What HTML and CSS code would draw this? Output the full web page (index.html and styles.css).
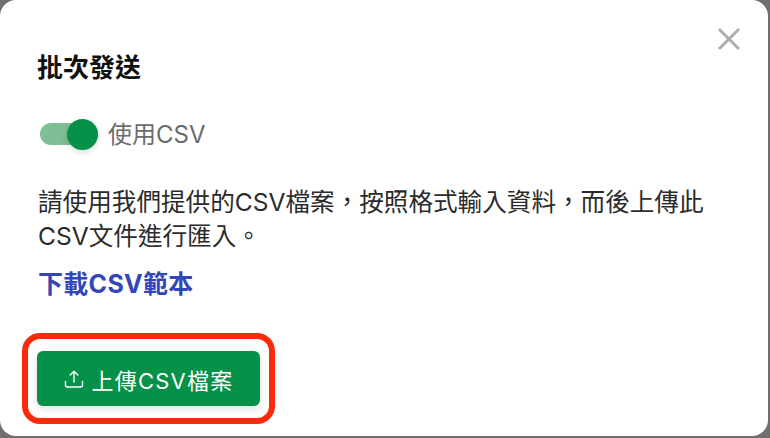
FILE: index.html
```html
<!DOCTYPE html>
<html lang="zh-Hant">
<head>
    <meta charset="UTF-8">
    <meta name="viewport" content="width=device-width, initial-scale=1.0">
    <title>批次發送</title>
    <link rel="stylesheet" href="styles.css">
</head>
<body>
    <div class="modal">
        <button class="close" aria-label="close">
            <svg width="24" height="24" viewBox="0 0 24 24" fill="none" stroke="#aeaeae" stroke-width="3" stroke-linecap="square">
                <path d="M3 3L21 21M21 3L3 21"/>
            </svg>
        </button>

        <h1>批次發送</h1>

        <div class="switch-row">
            <span class="switch"><span class="knob"></span></span>
            <span class="switch-label">使用CSV</span>
        </div>

        <p class="desc">請使用我們提供的CSV檔案，按照格式輸入資料，而後上傳此<br>CSV文件進行匯入。</p>

        <a class="template-link" href="#">下載CSV範本</a>

        <div class="upload-wrap">
            <button class="upload">
                <svg width="20" height="20" viewBox="0 0 20 20" fill="none" stroke="#fff" stroke-width="1.4" stroke-linecap="round" stroke-linejoin="round">
                    <path d="M1.5 12.5v3.5a2 2 0 0 0 2 2h13a2 2 0 0 0 2-2v-3.5"/>
                    <path d="M10 13V2.5M6.2 6L10 2.2 13.8 6"/>
                </svg>
                上傳CSV檔案
            </button>
            <span class="highlight"></span>
        </div>
    </div>
</body>
</html>
```

FILE: styles.css
```css
/* Page */
* {
    box-sizing: border-box;
}
html, body {
    margin: 0;
    height: 100%;
}
body {
    background-color: #6f6f6f;
    font-family: Inter, "Noto Sans CJK TC", sans-serif;
    overflow: hidden;
}

/* Modal */
.modal {
    position: relative;
    width: 768px;
    height: 436px;
    padding: 52px 38px 0;
    background-color: #fff;
    border-radius: 16px;
}
.close {
    position: absolute;
    top: 27px;
    right: 27px;
    padding: 0;
    border: none;
    background: none;
    display: flex;
}
h1 {
    margin: 0 0 0 -1px;
    font-size: 26px;
    line-height: 32px;
    font-weight: 700;
    color: #111;
}

/* Switch */
.switch-row {
    display: flex;
    align-items: center;
    gap: 10px;
    margin-top: 34px;
    height: 32px;
}
.switch {
    position: relative;
    width: 58px;
    height: 22px;
    margin-left: 2px;
    border-radius: 11px;
    background-color: #7fbf95;
}
.knob {
    position: absolute;
    top: -4px;
    right: 0;
    width: 31px;
    height: 31px;
    border-radius: 50%;
    background-color: #059148;
    box-shadow: 0 2px 6px rgba(0, 0, 0, 0.15);
}
.switch-label {
    margin-bottom: 4px;
    font-size: 24px;
    color: #6b6b6b;
}

/* Text */
.desc {
    margin: 35px 0 0;
    font-size: 24.6px;
    line-height: 34px;
    color: #2b2b2b;
}
.template-link {
    display: block;
    margin-top: 14px;
    font-size: 25px;
    line-height: 34px;
    font-weight: 700;
    letter-spacing: 0.3px;
    color: #3346b8;
    text-decoration: none;
}

/* Upload button */
.upload-wrap {
    position: relative;
    width: 223px;
    margin-top: 50px;
    margin-left: -1px;
}
.upload {
    display: flex;
    align-items: center;
    justify-content: center;
    gap: 8px;
    width: 100%;
    height: 55px;
    border: none;
    border-radius: 6px;
    background-color: #059148;
    color: #fff;
    font-family: inherit;
    font-size: 22px;
    letter-spacing: 1.2px;
    box-shadow: 0 3px 8px rgba(0, 0, 0, 0.12);
}
.highlight {
    position: absolute;
    top: -18px;
    right: -15px;
    bottom: -18px;
    left: -15px;
    border: 6px solid #fb2a0a;
    border-radius: 18px;
}
```
